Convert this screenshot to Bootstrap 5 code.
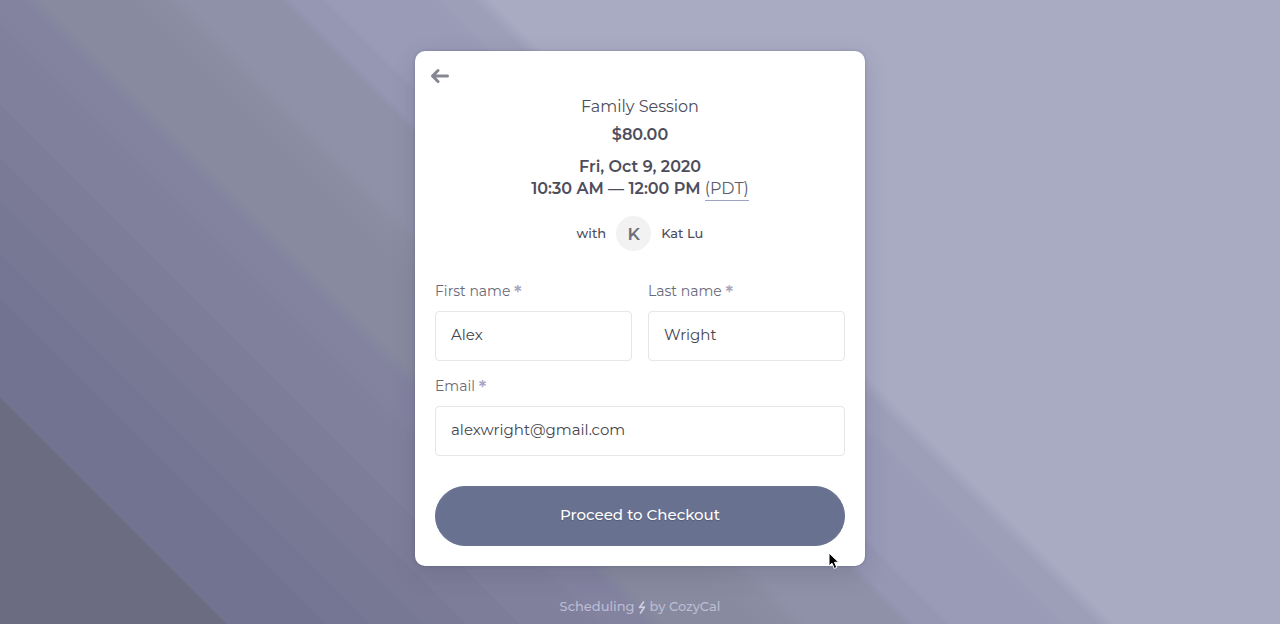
<!DOCTYPE html>
<html lang="en">
<head>
<meta charset="utf-8">
<meta name="viewport" content="width=device-width, initial-scale=1">
<title>Family Session – Booking</title>
<link href="https://cdn.jsdelivr.net/npm/bootstrap@5.3.0/dist/css/bootstrap.min.css" rel="stylesheet">
<style>
  body {
    font-family: Montserrat, Inter, "Open Sans", sans-serif;
    font-size: 16px;
    line-height: 22px;
    color: #4d4d5b;
    background: linear-gradient(45deg,
      #6b6b82 11.9%, #717390 11.9% 17.1%, #747693 17.1% 19.5%, #777994 19.5% 22.2%,
      #7a7a96 22.2% 24.5%, #7d7d99 24.5% 27.3%, #80809c 27.3% 31%, #8383a0 32% 34%,
      #888a9f 35% 39%, #8b8da3 41.5%, #8f91a9 42.5% 47.5%, #9597b3 48% 49.7%,
      #999bb7 50% 55.5%, #9d9fb9 56% 57.6%, #a9abc3 58.6%) fixed;
  }
  .booking {
    max-width: 450px;
    margin-top: 51px;
    padding: 20px;
    border-radius: 10px;
    box-shadow: 0 8px 24px rgba(60, 60, 90, .18), 0 0 3px rgba(60, 60, 90, .3);
  }
  .back { margin: -4px 0 0 -4px; line-height: 0; }
  .session { font-size: 16px; line-height: 28px; }
  .slot { margin-top: 7px; }
  .zone { color: #5d5d6b; border-bottom: 1px solid #9fa2c4; padding-bottom: 2px; }
  .host { font-size: 13px; margin-top: 16px; gap: 10px; line-height: 20px; }
  .avatar { width: 35px; height: 35px; background: #f2f2f2; color: #6f6f78; font-size: 17px; }
  .host-label { padding-bottom: 2px; }
  .details { margin-top: 30px; }
  .form-label { font-size: 14px; line-height: 20px; margin-bottom: 10px; color: #696978; }
  .form-label span { color: #aaa6bf; font-size: 18px; font-weight: 600; line-height: 1px; vertical-align: -3px; }
  .email-field { margin-top: 15px; }
  .form-control {
    height: 50px;
    padding: 0 15px 4px;
    font-size: 15px;
    color: #45454f;
    border-color: #e6e6e8;
    border-radius: 4px;
  }
  .checkout {
    --bs-btn-bg: #687290; --bs-btn-border-color: #687290; --bs-btn-color: #fff;
    --bs-btn-hover-bg: #5d6784; --bs-btn-hover-color: #fff;
    height: 60px;
    margin-top: 30px;
    padding-bottom: 7px;
    font-size: 15px;
    text-shadow: 0 1px 1px rgba(40, 40, 70, .3);
  }
  .credit { margin: 30px 0 8px; font-size: 13px; line-height: 20px; color: #bcbcd4; }
  .pointer { right: 25px; bottom: -4px; }
</style>
</head>
<body class="min-vh-100">
<main class="booking position-relative mx-auto bg-white">
  <button type="button" class="back btn btn-link p-0 border-0 d-block" aria-label="Back">
    <svg width="18" height="18" viewBox="0 0 18 18" fill="none" stroke="#878793" stroke-width="3" stroke-linecap="round" stroke-linejoin="round"><path d="M7 3.500 1.500 9 7 14.500M2.500 9h14"/></svg>
  </button>

  <header class="text-center">
    <div class="session mt-2">Family Session</div>
    <div class="session fw-semibold">$80.00</div>
    <div class="slot fw-semibold">Fri, Oct 9, 2020</div>
    <div><span class="fw-semibold">10:30 AM — 12:00 PM</span> <a href="#" class="zone text-decoration-none">(PDT)</a></div>
    <div class="host d-flex justify-content-center align-items-center fw-medium">
      <span class="host-label">with</span>
      <span class="avatar rounded-circle d-flex justify-content-center align-items-center fw-semibold">K</span>
      <span class="host-label">Kat Lu</span>
    </div>
  </header>

  <form class="details">
    <div class="row gx-3">
      <div class="col-6">
        <label class="form-label d-block" for="first">First name <span>*</span></label>
        <input class="form-control" id="first" type="text" value="Alex">
      </div>
      <div class="col-6">
        <label class="form-label d-block" for="last">Last name <span>*</span></label>
        <input class="form-control" id="last" type="text" value="Wright">
      </div>
      <div class="email-field col-12">
        <label class="form-label d-block" for="email">Email <span>*</span></label>
        <input class="form-control" id="email" type="email" value="alexwright@gmail.com">
      </div>
    </div>
    <button type="button" class="checkout btn rounded-pill w-100 fw-medium">Proceed to Checkout</button>
  </form>

  <svg class="pointer position-absolute" width="12" height="18" viewBox="0 0 12 18" aria-hidden="true"><path d="M1 1v13l3-2.800 2.300 5.300 2.500-1.100-2.300-5.100h4.200z" fill="#000" stroke="#fff" stroke-width="1"/></svg>
</main>

<footer class="credit text-center fw-medium">
  Scheduling
  <svg width="8" height="13" viewBox="0 0 8 13" fill="none" stroke="#d0d0e4" stroke-width="1.600" stroke-linejoin="round" stroke-linecap="round" aria-hidden="true"><path d="M5.500 1 1.500 6.500 6.500 6 2.500 12"/></svg>
  by CozyCal
</footer>
<script src="https://cdn.jsdelivr.net/npm/bootstrap@5.3.0/dist/js/bootstrap.bundle.min.js"></script>
</body>
</html>
